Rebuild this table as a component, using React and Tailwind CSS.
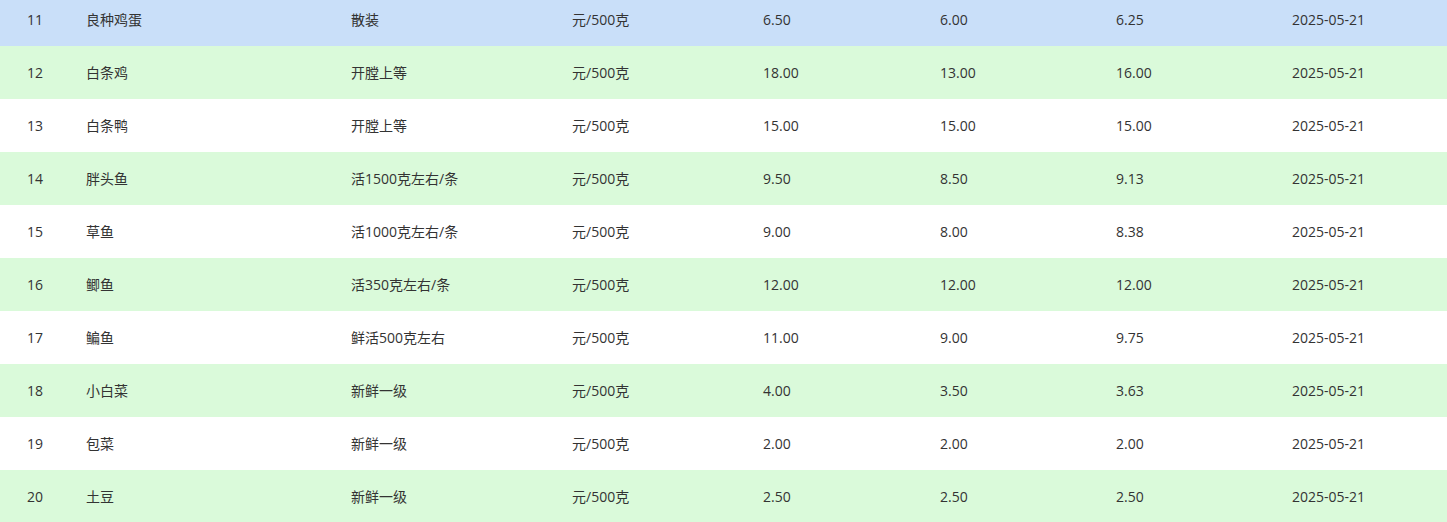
import React from 'react'

const rows = [
  ['11', '良种鸡蛋', '散装', '元/500克', '6.50', '6.00', '6.25', '2025-05-21'],
  ['12', '白条鸡', '开膛上等', '元/500克', '18.00', '13.00', '16.00', '2025-05-21'],
  ['13', '白条鸭', '开膛上等', '元/500克', '15.00', '15.00', '15.00', '2025-05-21'],
  ['14', '胖头鱼', '活1500克左右/条', '元/500克', '9.50', '8.50', '9.13', '2025-05-21'],
  ['15', '草鱼', '活1000克左右/条', '元/500克', '9.00', '8.00', '8.38', '2025-05-21'],
  ['16', '鲫鱼', '活350克左右/条', '元/500克', '12.00', '12.00', '12.00', '2025-05-21'],
  ['17', '鳊鱼', '鲜活500克左右', '元/500克', '11.00', '9.00', '9.75', '2025-05-21'],
  ['18', '小白菜', '新鲜一级', '元/500克', '4.00', '3.50', '3.63', '2025-05-21'],
  ['19', '包菜', '新鲜一级', '元/500克', '2.00', '2.00', '2.00', '2025-05-21'],
  ['20', '土豆', '新鲜一级', '元/500克', '2.50', '2.50', '2.50', '2025-05-21'],
]

function rowBg(i) {
  if (i === 0) return 'bg-[#c9dff9]'
  return i % 2 === 1 ? 'bg-[#dafada]' : 'bg-white'
}

export default function App() {
  return (
    <div
      className="h-[522px] w-[1447px] overflow-hidden bg-white text-[14px] text-[#333333]"
      style={{ fontFamily: '"Open Sans", "Noto Sans CJK SC", sans-serif' }}
    >
      <div className="-mt-[7px]">
        {rows.map((r, i) => (
          <div
            key={r[0]}
            className={`grid h-[53px] grid-cols-[86px_265px_221px_191px_177px_176px_176px_1fr] items-center ${rowBg(i)}`}
          >
            <span className="pl-[27px]">{r[0]}</span>
            {r.slice(1).map((c, j) => (
              <span key={j} className="whitespace-nowrap">{c}</span>
            ))}
          </div>
        ))}
      </div>
    </div>
  )
}
